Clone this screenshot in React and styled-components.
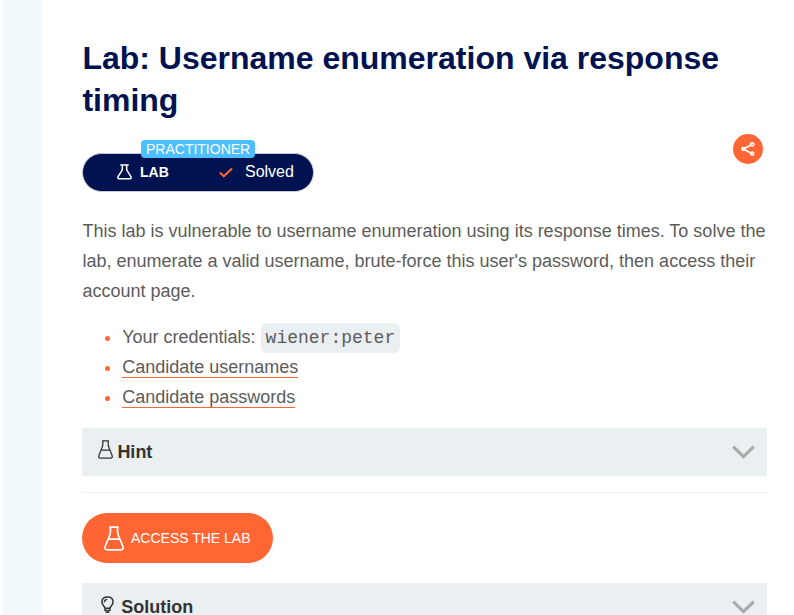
import React from 'react';
import styled, { createGlobalStyle } from 'styled-components';

const GlobalStyle = createGlobalStyle`
  * { box-sizing: border-box; }
  html, body { margin: 0; background: #fff; }
  body { font-family: "Liberation Sans", Arial, sans-serif; overflow: hidden; }
`;

const Page = styled.div`
  display: flex;
  width: 794px;
  height: 615px;
  overflow: hidden;
  padding-left: 2px;
`;

const SideStrip = styled.aside`
  flex: 0 0 40px;
  background: #f1f9fc;
`;

const Content = styled.main`
  width: 685px;
  flex: none;
  margin-left: 40.4px;
  padding-top: 37px;
`;

const Title = styled.h1`
  margin: 0;
  font-size: 32px;
  line-height: 42px;
  font-weight: 700;
  color: #00124f;
`;

const StatusRow = styled.div`
  display: flex;
  justify-content: space-between;
  align-items: flex-start;
  height: 70px;
  margin-top: 13px;
  padding-right: 4px;
`;

const LabStatus = styled.div`
  position: relative;
  display: flex;
  align-items: center;
  width: 231.4px;
  height: 39px;
  margin-top: 18.5px;
  padding: 0 18.9px 0 33.6px;
  border: 1px solid #c8cbd3;
  border-radius: 20px;
  background: #00124f;
  color: #fff;
`;

const Level = styled.span`
  position: absolute;
  left: 57.6px;
  top: -13.5px;
  height: 18px;
  padding: 0 5px;
  border-radius: 4px;
  background: #4dbfff;
  font-size: 14px;
  line-height: 18px;
`;

const LabLabel = styled.strong`
  margin-left: 8px;
  font-size: 14px;
`;

const Solved = styled.span`
  display: flex;
  align-items: center;
  gap: 12px;
  margin-left: auto;
  font-size: 16px;
`;

const ShareButton = styled.button`
  display: flex;
  align-items: center;
  justify-content: center;
  width: 30px;
  height: 30px;
  padding: 0;
  border: 0;
  border-radius: 50%;
  background: #ff6633;
  color: #fff;
`;

const Paragraph = styled.p`
  margin: 12px 0 16px;
  color: #5c5c5b;
  font-size: 18px;
  line-height: 30px;
  white-space: nowrap;
`;

const List = styled.ul`
  margin: 0 0 16px;
  padding: 0 0 0 22.6px;
  list-style: none;
  color: #5c5c5b;
  font-size: 18px;
  line-height: 30px;
`;

const Item = styled.li`
  display: flex;
  align-items: center;
  height: 30px;
  &::before {
    content: "";
    width: 5px;
    height: 5px;
    margin: 3px 12.2px 0 0;
    border-radius: 50%;
    background: #ff6633;
  }
`;

const Code = styled.code`
  margin: 2px 0 0 5px;
  padding: 1px 4.5px 0 5px;
  border-radius: 6px;
  background: #eaeff2;
  font-family: "Liberation Mono", monospace;
  font-size: 18px;
  height: 30px;
  line-height: 29px;
`;

const Link = styled.a`
  height: 21px;
  line-height: 20px;
  border-bottom: 1px solid #ff6633;
  color: inherit;
  text-decoration: none;
`;

const Panel = styled.div`
  display: flex;
  align-items: center;
  justify-content: space-between;
  height: 48px;
  padding: 0 12.4px 0 ${p => p.$indent}px;
  background: #eaeff2;
  color: #333332;
`;

const PanelTitle = styled.span`
  display: flex;
  align-items: center;
  gap: ${p => p.$gap}px;
  font-size: 18px;
  font-weight: 700;
  svg { margin-top: -5px; }
`;

const Divider = styled.hr`
  height: 1px;
  margin: 16px 0 20px;
  border: 0;
  background: #f0f0f1;
`;

const AccessButton = styled.button`
  display: flex;
  align-items: center;
  gap: 7px;
  width: 191px;
  height: 50px;
  margin-bottom: 20px;
  padding: 0 0 0 21.6px;
  border: 0;
  border-radius: 25px;
  background: #ff6633;
  color: #fff;
  font: 14px "Liberation Sans", Arial, sans-serif;
  white-space: nowrap;
`;

const Flask = ({ width, height, stroke }) => (
  <svg width={width} height={height} viewBox="0 0 20 25" preserveAspectRatio="none" fill="none" stroke="currentColor" strokeWidth={stroke} strokeLinejoin="round" strokeLinecap="round">
    <path d="M6 1.2h8M6.5 1.2v3.2c0 2.2-.2 3.6-1 5.3L1.2 20.3c-.9 2 .1 3.6 2.1 3.6h13.4c2 0 3-1.6 2.1-3.6L14.5 9.7c-.8-1.7-1-3.1-1-5.3V1.2M5 13.2h10" />
  </svg>
);

const SmallFlask = () => (
  <svg width="15" height="16" viewBox="0 0 15 16" fill="none" stroke="currentColor" strokeWidth="1.5" strokeLinejoin="round">
    <path d="M3.3 1h8.4M5.3 1v4.8L1.1 12.7c-.6 1-.1 2 .9 2h11c1 0 1.5-1 .9-2L9.7 5.8V1" />
  </svg>
);

const Chevron = () => (
  <svg width="23" height="14" viewBox="0 0 23 14" fill="none" stroke="#aaa" strokeWidth="3.2">
    <path d="M1.2 1.6 11.5 11.6l10.3-10" />
  </svg>
);

const Check = () => (
  <svg width="14" height="11" viewBox="0 0 14 11" fill="none" stroke="#ff6633" strokeWidth="2.1">
    <path d="m1 5.5 3.8 3.8L13 1.4" />
  </svg>
);

const Share = () => (
  <svg width="14" height="14" viewBox="0 0 14 14" fill="none" stroke="currentColor" strokeWidth="1.7">
    <path d="m3.6 6.3 6-3.1M3.6 7.8l6 3.1" />
    <circle cx="2.3" cy="7" r="1.3" />
    <circle cx="11.2" cy="2.4" r="1.5" />
    <circle cx="11.2" cy="11.6" r="1.5" />
  </svg>
);

const Bulb = () => (
  <svg width="13" height="18" viewBox="0 0 13 18" fill="none" stroke="currentColor" strokeWidth="1.5" strokeLinecap="round" strokeLinejoin="round">
    <path d="M4 12.3c0-2-3.1-3.1-3.1-6.3C.9 2.8 3.3 1 6.5 1s5.6 1.8 5.6 5c0 3.2-3.1 4.3-3.1 6.3M4 12.3h5v2.2H4zM5.3 16.2h2.4M3.4 5.8c.1-1.3 1-2.1 2.2-2.3" />
  </svg>
);

export default function App() {
  return (
    <>
      <GlobalStyle />
      <Page>
        <SideStrip />
        <Content>
          <Title>Lab: Username enumeration via response timing</Title>
          <StatusRow>
            <LabStatus>
              <Level>PRACTITIONER</Level>
              <SmallFlask />
              <LabLabel>LAB</LabLabel>
              <Solved><Check />Solved</Solved>
            </LabStatus>
            <ShareButton aria-label="Share"><Share /></ShareButton>
          </StatusRow>
          <Paragraph>
            This lab is vulnerable to username enumeration using its response times. To solve the<br />
            lab, enumerate a valid username, brute-force this user's password, then access their<br />
            account page.
          </Paragraph>
          <List>
            <Item>Your credentials: <Code>wiener:peter</Code></Item>
            <Item><Link href="#usernames">Candidate usernames</Link></Item>
            <Item><Link href="#passwords">Candidate passwords</Link></Item>
          </List>
          <Panel $indent={15.6}>
            <PanelTitle $gap={4.4}><Flask width={15} height={19} stroke={1.7} />Hint</PanelTitle>
            <Chevron />
          </Panel>
          <Divider />
          <AccessButton><Flask width={20} height={25} stroke={1.7} />ACCESS THE LAB</AccessButton>
          <Panel $indent={18.6}>
            <PanelTitle $gap={7.3}><Bulb />Solution</PanelTitle>
            <Chevron />
          </Panel>
        </Content>
      </Page>
    </>
  );
}
